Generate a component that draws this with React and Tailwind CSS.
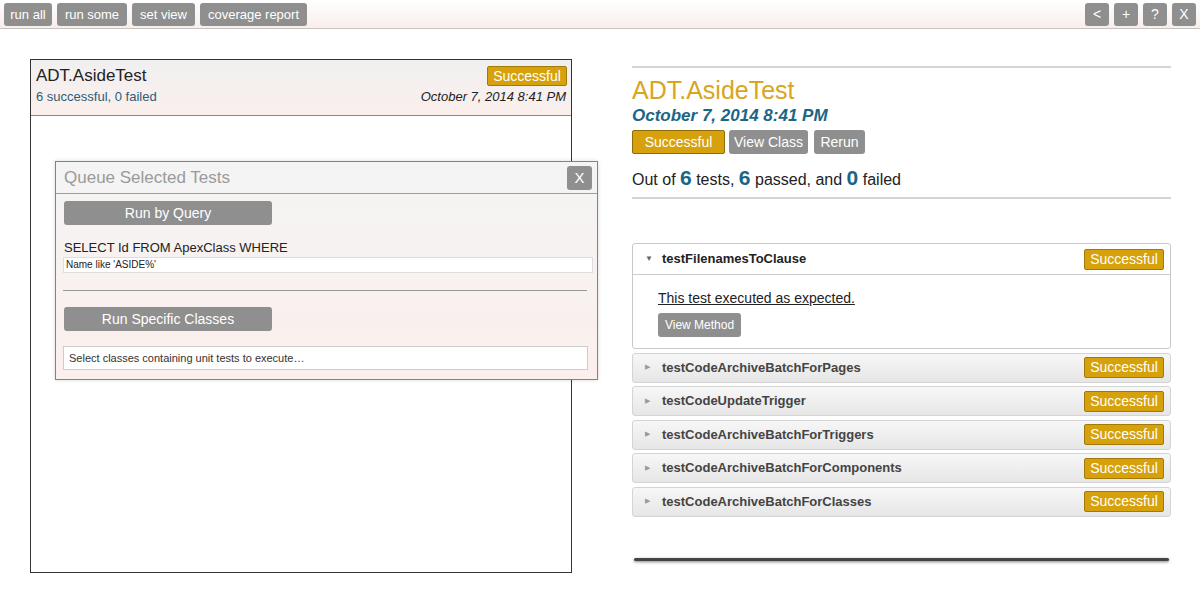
import React from 'react';

const FONT = { fontFamily: '"Liberation Sans", Arial, sans-serif' };

const TESTS = [
  'testCodeArchiveBatchForPages',
  'testCodeUpdateTrigger',
  'testCodeArchiveBatchForTriggers',
  'testCodeArchiveBatchForComponents',
  'testCodeArchiveBatchForClasses',
];

function GrayButton({ children, className = '' }) {
  return (
    <button className={`bg-[#8f8f8f] text-white rounded-[3px] leading-none ${className}`}>
      {children}
    </button>
  );
}

function Badge({ className = '' }) {
  return (
    <span
      className={`inline-flex items-center justify-center bg-[#d6a10b] border border-[#a27a0a] text-white text-[14px] rounded-[2px] ${className}`}
    >
      Successful
    </span>
  );
}

export default function App() {
  return (
    <div style={FONT} className="w-[1200px] h-[598px] bg-white overflow-hidden text-[#222]">
      {/* toolbar */}
      <div className="h-[29px] flex items-center justify-between px-[4px] bg-gradient-to-b from-white to-[#f8eeeb] border-b border-[#c9c3c1]">
        <div className="flex gap-[5px] text-[13px]">
          <GrayButton className="w-[48px] h-[23px]">run all</GrayButton>
          <GrayButton className="w-[70px] h-[23px]">run some</GrayButton>
          <GrayButton className="w-[63px] h-[23px]">set view</GrayButton>
          <GrayButton className="w-[107px] h-[23px]">coverage report</GrayButton>
        </div>
        <div className="flex gap-[5px] text-[14px]">
          {['<', '+', '?', 'X'].map(s => (
            <GrayButton key={s} className="w-[24px] h-[23px]">{s}</GrayButton>
          ))}
        </div>
      </div>

      <div className="flex pl-[30px] pt-[30px] gap-[60px]">
        {/* left panel */}
        <div className="relative w-[542px] h-[514px] border border-[#333]">
          <div className="h-[56px] px-[5px] pt-[6px] bg-gradient-to-b from-[#f0f0f0] to-[#fbefec] border-b border-[#888]">
            <div className="flex justify-between items-start">
              <span className="text-[17px] text-[#222] leading-[20px]">ADT.AsideTest</span>
              <Badge className="w-[80px] h-[20px] mr-[-1px]" />
            </div>
            <div className="flex justify-between mt-[2px] text-[13px] leading-[18px]">
              <span className="text-[#2b5d78]">6 successful, 0 failed</span>
              <span className="italic text-[#222]">October 7, 2014 8:41 PM</span>
            </div>
          </div>

          {/* modal overlay */}
          <div className="absolute left-[24px] top-[101px] w-[543px] h-[219px] border border-[#b86b6b] bg-gradient-to-b from-[#f4f4f4] to-[#fbefec] shadow-[0_0_4px_rgba(0,0,0,0.15)]">
            <div className="h-[32px] flex items-center justify-between pl-[8px] pr-[5px] border-b border-[#a99]">
              <span className="text-[17px] text-[#9a9a9a]">Queue Selected Tests</span>
              <GrayButton className="w-[25px] h-[24px] text-[15px]">X</GrayButton>
            </div>
            <div className="px-[8px] pt-[7px]">
              <GrayButton className="w-[208px] h-[24px] text-[14px]">Run by Query</GrayButton>
              <div className="mt-[15px] text-[13px] leading-[16px] text-[#222]">SELECT Id FROM ApexClass WHERE</div>
              <div className="mt-[1px] -ml-[1px] mr-[-4px] h-[16px] bg-white border border-[#ddd] text-[10px] leading-[14px] px-[2px] text-[#222]">
                Name like 'ASIDE%'
              </div>
              <div className="mt-[17px] -ml-[1px] mr-[2px] border-t border-[#999]" />
              <GrayButton className="mt-[16px] w-[208px] h-[24px] text-[14px]">Run Specific Classes</GrayButton>
              <div className="mt-[15px] -ml-[1px] mr-[1px] h-[24px] bg-white border border-[#ccc] text-[11px] leading-[22px] px-[5px] text-[#333]">
                Select classes containing unit tests to execute…
              </div>
            </div>
          </div>
        </div>

        {/* right panel */}
        <div className="w-[539px] pt-[7px]">
          <div className="border-t-2 border-[#d4d4d4]" />
          <div className="mt-[8px] text-[25px] leading-[28px] text-[#d9a521]">ADT.AsideTest</div>
          <div className="mt-[2px] text-[17px] leading-[20px] font-bold italic text-[#1b6585]">October 7, 2014 8:41 PM</div>
          <div className="mt-[4px] flex text-[14px]">
            <button className="w-[93px] h-[24px] bg-[#d6a10b] border border-[#8f6c0a] text-white rounded-[2px] leading-none">Successful</button>
            <GrayButton className="w-[79px] h-[24px] ml-[4px]">View Class</GrayButton>
            <GrayButton className="w-[51px] h-[24px] ml-[6px]">Rerun</GrayButton>
          </div>
          <div className="mt-[12px] text-[16px] leading-[24px] text-[#222]">
            Out of <b className="text-[21px] text-[#1b6585]">6</b> tests, <b className="text-[21px] text-[#1b6585]">6</b> passed, and <b className="text-[21px] text-[#1b6585]">0</b> failed
          </div>
          <div className="mt-[5px] border-t-2 border-[#d4d4d4]" />

          {/* accordion */}
          <div className="mt-[44px] flex flex-col gap-[3.5px]">
            <div className="rounded-[3px] border border-[#c8c8c8] bg-white">
              <div className="h-[31px] flex items-center justify-between pl-[12px] pr-[6px] border-b border-[#ccc]">
                <div className="flex items-center">
                  <span className="text-[8px] text-[#666] w-[17px]">▼</span>
                  <span className="text-[13px] font-bold text-[#222]">testFilenamesToClause</span>
                </div>
                <Badge className="w-[80px] h-[21px]" />
              </div>
              <div className="pl-[25px] pt-[14px] pb-[11px]">
                <div className="text-[14px] leading-[18px] underline text-[#222]">This test executed as expected.</div>
                <GrayButton className="mt-[6px] w-[83px] h-[24px] text-[12px]">View Method</GrayButton>
              </div>
            </div>
            {TESTS.map(t => (
              <div
                key={t}
                className="h-[30px] flex items-center justify-between pl-[12px] pr-[6px] rounded-[3px] border border-[#d4d4d4] bg-gradient-to-b from-[#f7f7f7] to-[#e6e6e6]"
              >
                <div className="flex items-center">
                  <span className="text-[7px] text-[#999] w-[17px]">▶</span>
                  <span className="text-[13px] font-bold text-[#444]">{t}</span>
                </div>
                <Badge className="w-[80px] h-[21px]" />
              </div>
            ))}
          </div>

          <div className="mt-[41px] mx-[2px] h-[3px] rounded-full bg-[#444] shadow-[0_1px_3px_rgba(0,0,0,0.5)]" />
        </div>
      </div>
    </div>
  );
}
